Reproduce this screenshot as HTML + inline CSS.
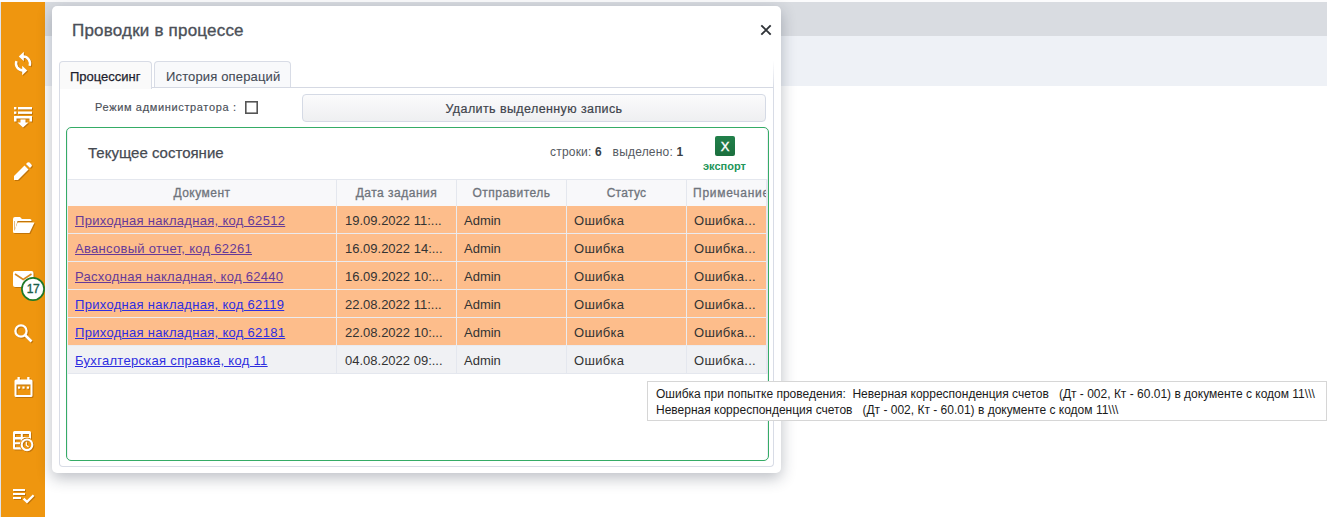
<!DOCTYPE html>
<html><head><meta charset="utf-8">
<style>
*{margin:0;padding:0;box-sizing:border-box}
html,body{width:1327px;height:517px;overflow:hidden;background:#fff;font-family:"Liberation Sans",sans-serif}
body>div,body>svg{position:absolute}
#topstrip{left:0;top:0;width:1327px;height:2px;background:#fcfcfd}
#band1{left:45px;top:2px;width:1282px;height:34px;background:#d9dce1}
#band2{left:45px;top:36px;width:1282px;height:50px;background:#eef1f6}
#side{left:0;top:2px;width:45px;height:515px;background:#ef960f}
#sideedge{left:0;top:2px;width:1px;height:515px;background:#dfe4ec}
.ic{position:absolute;filter:drop-shadow(1px 1px 0 rgba(110,55,0,.35))}
#modal{left:52px;top:6px;width:729px;height:467px;background:#fff;border-radius:5px;box-shadow:0 5px 15px rgba(30,40,60,.3)}
#title{left:72px;top:21px;font-size:17px;letter-spacing:.2px;color:#4b5058;-webkit-text-stroke:.35px #4b5058;white-space:nowrap;line-height:20px}
#close{left:760px;top:24px;width:12px;height:12px}
.tab{top:61px;height:27px;border:1px solid #d8dce6;border-bottom:none;border-radius:4px 4px 0 0;font-size:13px;color:#444b56;white-space:nowrap;line-height:15px;padding-top:6.5px}
#tab1{left:59px;width:93px;background:#fafafa;color:#1e1e2e;padding-left:10px;height:28px;z-index:2;-webkit-text-stroke:.25px #1e1e2e}
#tab2{left:154px;width:137px;height:26px;background:#f8f9fb;padding-left:11px;letter-spacing:.15px;-webkit-text-stroke:.1px #444b56}
#panel{left:59px;top:87px;width:715px;height:380px;border:1px solid #d8dce6;border-top-color:#d5d9e3;border-radius:0 0 4px 4px}
#panelfade{left:773px;top:60px;width:1px;height:28px;background:linear-gradient(rgba(216,220,230,0),#d8dce6)}
#admlbl{left:95px;top:101px;font-size:11px;letter-spacing:.65px;color:#4a4f58;white-space:nowrap;line-height:13px;-webkit-text-stroke:.15px #4a4f58}
#chk{left:245px;top:101px;width:13px;height:13px;border:1.5px solid #5a5a5a;border-top-color:#444}
#btn{left:302px;top:94px;width:464px;height:28px;border:1px solid #d5dae5;border-radius:4px;background:linear-gradient(#fbfbfc,#eeeff1);font-size:12.5px;letter-spacing:.4px;color:#3f444c;text-align:center;line-height:15px;padding-top:7px;white-space:nowrap;-webkit-text-stroke:.2px #3f444c}
#green{left:66px;top:127px;width:703px;height:334px;border:1.5px solid #35ac66;border-radius:5px;box-shadow:inset 1px 0 0 #eeeef5,inset -1px 0 0 #eeeef5}
#gtitle{left:88px;top:144px;font-size:15px;color:#454a52;-webkit-text-stroke:.25px #454a52;white-space:nowrap;line-height:17px}
#counts{left:550px;top:145px;font-size:12px;letter-spacing:.2px;color:#555a62;white-space:pre;line-height:14px}
#counts b{color:#3a3f46}
#xl{left:715px;top:136px;width:20px;height:20px;background:linear-gradient(#21804a,#1b6f3e);border-radius:2px;color:#fff;font-size:13px;text-align:center;line-height:21px;-webkit-text-stroke:.4px #fff}
#exp{left:703px;top:159.5px;font-size:11px;font-weight:bold;color:#23955a;white-space:nowrap;line-height:13px}
#thead{left:68px;top:179px;width:698px;height:27px;background:#f8f8fa;border-top:1px solid #e4e7ee}
.th{position:absolute;top:0;height:26px;border-right:1px solid #e4e7ee;font-size:12px;letter-spacing:.5px;color:#6f747c;-webkit-text-stroke:.3px #6f747c;text-align:center;line-height:14px;padding-top:6px;white-space:nowrap;overflow:hidden}
.row{left:68px;width:698px;height:28px;border-bottom:1px solid #ebebef}
.r1{background:#fdbd8b}
.r2{background:#f0f1f4;border-bottom-color:#e4e7ee}
.td{position:absolute;top:0;height:27px;border-right:1px solid #ebebef;font-size:13px;color:#333;line-height:15px;padding-top:7px;white-space:nowrap;overflow:hidden}
.r2 .td{border-right-color:#e4e7ee}
.c1{left:0;width:269px;padding-left:7px}
.c2{left:269px;width:120px;padding-left:8px}
.c3{left:389px;width:110px;padding-left:7px}
.c4{left:499px;width:120px;padding-left:7px;letter-spacing:.3px}
.c5{left:619px;width:79px;padding-left:7px;border-right:none!important;letter-spacing:.3px}
.c1 a{letter-spacing:.3px;text-decoration:underline;text-underline-offset:1px}
.v{color:#663a98}
.u{color:#2e2ee0}
#tip{left:647px;top:381px;width:680px;height:40px;background:#fff;border:1px solid #d6d6d6;font-size:12px;letter-spacing:0;color:#1a1a1a;line-height:16px;padding:4px 0 0 8px;white-space:pre}
</style></head><body>
<div id="topstrip"></div>
<div id="band1"></div>
<div id="band2"></div>
<div id="side"></div>
<div id="sideedge"></div>

<!-- sidebar icons -->
<svg class="ic" style="left:12px;top:50px" width="22" height="26" viewBox="0 0 22 26">
 <path d="M11 6.5A7 7 0 0 1 17.58 15.89" fill="none" stroke="#fff" stroke-width="2.4"/>
 <path d="M6.8 6.5L11.8 1.8V11.2Z" fill="#fff"/>
 <path d="M11 20.5A7 7 0 0 1 4.42 11.11" fill="none" stroke="#fff" stroke-width="2.4"/>
 <path d="M15.2 20.5L10.2 15.8V25.2Z" fill="#fff"/>
</svg>
<svg class="ic" style="left:14px;top:107px" width="19" height="21" viewBox="0 0 19 21">
 <rect x="0" y="0" width="2.4" height="2.4" fill="#fff"/><rect x="4" y="0" width="14" height="2.4" fill="#fff"/>
 <rect x="0" y="4.5" width="2.4" height="2.4" fill="#fff"/><rect x="4" y="4.5" width="14" height="2.4" fill="#fff"/>
 <path d="M0 9H18V14.5H15.5V11.5H2.5V14.5H0Z" fill="#fff"/>
 <path d="M6.5 12.5H11.5V15.5H14.5L9 20.5L3.5 15.5H6.5Z" fill="#fff"/>
</svg>
<svg class="ic" style="left:14px;top:162px" width="19" height="19" viewBox="0 0 19 19">
 <path d="M0 14L10.5 3.5L14.5 7.5L4 18H0Z" fill="#fff"/>
 <path d="M12 2L13.5 0.6Q14.5 -0.3 15.5 0.6L17.4 2.5Q18.3 3.5 17.4 4.5L16 6Z" fill="#fff"/>
</svg>
<svg class="ic" style="left:13px;top:217px" width="22" height="17" viewBox="0 0 22 17">
 <path d="M0 2Q0 0 2 0H7L9 2H17Q18.5 2 18.5 3.5V4H4.5L2 13V4H0Z" fill="#fff"/>
 <path d="M0 2V15Q0 16 1.5 16H16.5L21.5 5.5H4.5L1.5 14V2Z" fill="#fff"/>
</svg>
<svg class="ic" style="left:13px;top:271px" width="21" height="17" viewBox="0 0 21 17">
 <rect x="0" y="0" width="20.5" height="16" rx="2" fill="#fff"/>
 <path d="M2 3L10.25 8.5L18.5 3" fill="none" stroke="#d88a20" stroke-width="1.6"/>
</svg>
<svg style="left:21px;top:277px" width="24" height="24" viewBox="0 0 24 24"><circle cx="12" cy="12" r="11.1" fill="#fff" stroke="#1f7a28" stroke-width="1.7"/><text x="12" y="16.4" text-anchor="middle" font-family="Liberation Sans" font-size="12" letter-spacing="-.3" fill="#1b5f4a" stroke="#1b5f4a" stroke-width=".35">17</text></svg>
<svg class="ic" style="left:13.6px;top:323.6px" width="19" height="20" viewBox="0 0 19 20">
 <circle cx="7" cy="7" r="5.6" fill="none" stroke="#fff" stroke-width="2.3"/>
 <path d="M11 11L17.5 17.5" stroke="#fff" stroke-width="2.6"/>
</svg>
<svg class="ic" style="left:14px;top:377px" width="19" height="21" viewBox="0 0 19 21">
 <rect x="3.5" y="0" width="2.3" height="3" fill="#fff"/><rect x="13.2" y="0" width="2.3" height="3" fill="#fff"/>
 <path d="M2 2.5H17Q18.5 2.5 18.5 4V18.5Q18.5 20 17 20H2Q0.5 20 0.5 18.5V4Q0.5 2.5 2 2.5ZM2.5 7.5V18H16.5V7.5Z" fill="#fff" fill-rule="evenodd"/>
 <rect x="4" y="9.5" width="2.2" height="2.2" fill="#fff"/><rect x="8.4" y="9.5" width="2.2" height="2.2" fill="#fff"/><rect x="12.8" y="9.5" width="2.2" height="2.2" fill="#fff"/>
</svg>
<svg class="ic" style="left:13px;top:431px" width="21" height="21" viewBox="0 0 21 21">
 <defs><mask id="mk"><rect width="21" height="21" fill="#fff"/><circle cx="14" cy="13.8" r="7.2" fill="#000"/></mask></defs>
 <path mask="url(#mk)" d="M1.5 0H16.5Q18 0 18 1.5V17Q18 18.5 16.5 18.5H1.5Q0 18.5 0 17V1.5Q0 0 1.5 0ZM2 3V6H7.8V3ZM9.8 3V6H16V3ZM2 8.5V11.2H7.8V8.5ZM2 13.2V16.2H7.8V13.2Z" fill="#fff" fill-rule="evenodd"/>
 <circle cx="14" cy="13.8" r="5.3" fill="none" stroke="#fff" stroke-width="2.1"/>
 <path d="M13.3 10.8V14.2L15.6 16" fill="none" stroke="#fff" stroke-width="1.2"/>
</svg>
<svg class="ic" style="left:13px;top:489px" width="22" height="15" viewBox="0 0 22 15">
 <rect x="0" y="0" width="12" height="2" fill="#fff"/>
 <rect x="0" y="4" width="12" height="2" fill="#fff"/>
 <rect x="0" y="8" width="8" height="2" fill="#fff"/>
 <path d="M10.6 9.6L14 12.9L20.6 6.3" fill="none" stroke="#fff" stroke-width="2.2"/>
</svg>

<div id="modal"></div>
<div id="title">Проводки в процессе</div>
<svg id="close" viewBox="0 0 12 12"><path d="M1.3 1.3L10.7 10.7M10.7 1.3L1.3 10.7" stroke="#2f3338" stroke-width="1.9"/></svg>
<div id="panel"></div>
<div id="panelfade"></div>
<div id="tab1" class="tab">Процессинг</div>
<div id="tab2" class="tab">История операций</div>
<div id="admlbl">Режим администратора :</div>
<svg style="left:245px;top:101px" width="13" height="13" viewBox="0 0 13 13"><rect x=".8" y=".8" width="11.4" height="11.4" fill="#fff" stroke="#555" stroke-width="1.6"/></svg>
<div id="btn">Удалить выделенную запись</div>
<div id="green"></div>
<div id="gtitle">Текущее состояние</div>
<div id="counts">строки: <b>6</b>   выделено: <b>1</b></div>
<div id="xl">X</div>
<div id="exp">экспорт</div>

<div style="left:766px;top:179px;width:2px;height:195px;background:#e6e6f0"></div>
<div id="thead">
 <div class="th c1" style="padding-left:0">Документ</div>
 <div class="th c2" style="padding-left:0">Дата задания</div>
 <div class="th c3" style="padding-left:0">Отправитель</div>
 <div class="th c4" style="padding-left:0">Статус</div>
 <div class="th c5" style="text-align:left;padding-left:6px;letter-spacing:.75px">Примечание</div>
</div>

<div class="row r1" style="top:206px">
 <div class="td c1"><a class="v">Приходная накладная, код 62512</a></div>
 <div class="td c2">19.09.2022 11:...</div><div class="td c3">Admin</div><div class="td c4">Ошибка</div><div class="td c5">Ошибка...</div>
</div>
<div class="row r1" style="top:234px">
 <div class="td c1"><a class="v">Авансовый отчет, код 62261</a></div>
 <div class="td c2">16.09.2022 14:...</div><div class="td c3">Admin</div><div class="td c4">Ошибка</div><div class="td c5">Ошибка...</div>
</div>
<div class="row r1" style="top:262px">
 <div class="td c1"><a class="v">Расходная накладная, код 62440</a></div>
 <div class="td c2">16.09.2022 10:...</div><div class="td c3">Admin</div><div class="td c4">Ошибка</div><div class="td c5">Ошибка...</div>
</div>
<div class="row r1" style="top:290px">
 <div class="td c1"><a class="u">Приходная накладная, код 62119</a></div>
 <div class="td c2">22.08.2022 11:...</div><div class="td c3">Admin</div><div class="td c4">Ошибка</div><div class="td c5">Ошибка...</div>
</div>
<div class="row r1" style="top:318px">
 <div class="td c1"><a class="u">Приходная накладная, код 62181</a></div>
 <div class="td c2">22.08.2022 10:...</div><div class="td c3">Admin</div><div class="td c4">Ошибка</div><div class="td c5">Ошибка...</div>
</div>
<div class="row r2" style="top:346px">
 <div class="td c1"><a class="u">Бухгалтерская справка, код 11</a></div>
 <div class="td c2">04.08.2022 09:...</div><div class="td c3">Admin</div><div class="td c4">Ошибка</div><div class="td c5">Ошибка...</div>
</div>

<div id="tip">Ошибка при попытке проведения:  Неверная корреспонденция счетов   (Дт - 002, Кт - 60.01) в документе с кодом 11\\\
Неверная корреспонденция счетов   (Дт - 002, Кт - 60.01) в документе с кодом 11\\\</div>
</body></html>
